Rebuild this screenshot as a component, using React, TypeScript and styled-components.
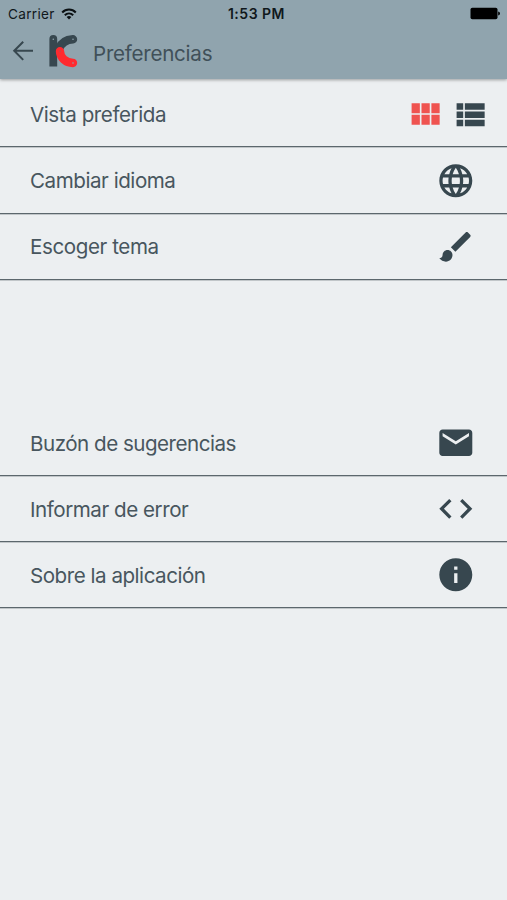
import React from "react";
import styled, { createGlobalStyle } from "styled-components";

const ink = "#37474f";

const GlobalStyle = createGlobalStyle`
  * { box-sizing: border-box; }
  body { margin: 0; background: #eceff1; font-family: Inter, "Liberation Sans", sans-serif; }
`;

const Screen = styled.main`
  min-height: 900px;
  background: #eceff1;
  overflow: hidden;
`;

const Header = styled.header`
  height: 79px;
  background: #90a4ae;
  box-shadow: 0 1px 3px rgba(0, 0, 0, 0.35);
`;

const StatusBar = styled.div`
  display: grid;
  grid-template-columns: 1fr auto 1fr;
  align-items: center;
  height: 27px;
  padding: 0 7px 0 8px;
  color: #10181c;
  font-size: 13.6px;
`;

const Carrier = styled.div`
  display: flex;
  align-items: center;
  gap: 6px;
  letter-spacing: 0.3px;
`;

const Clock = styled.div`
  font-weight: 600;
  font-size: 14px;
  letter-spacing: 0.5px;
  padding-left: 5px;
`;

const BatterySlot = styled.div`
  display: flex;
  justify-content: flex-end;
`;

const NavBar = styled.div`
  display: flex;
  align-items: center;
  height: 50px;
  padding-left: 9px;
`;

const Back = styled.button`
  display: flex;
  padding: 0;
  border: 0;
  margin-top: -2px;
  background: none;
  color: ${ink};
`;

const Logo = styled.svg`
  margin: -2px 15px 0 11px;
`;

const Title = styled.h1`
  margin: 2px 0 0;
  font-size: 20.6px;
  font-weight: 400;
  color: #405059;
  letter-spacing: -0.26px;
`;

const List = styled.section<{ $gap: number }>`
  margin-top: ${(p) => p.$gap}px;
`;

const Row = styled.div<{ $end: number }>`
  display: flex;
  align-items: center;
  justify-content: space-between;
  height: 66.1px;
  padding: 1.2px ${(p) => p.$end}px 0 30px;
  border-bottom: 1px solid #5c676d;
  box-shadow: 0 1px 0 rgba(92, 103, 109, 0.3);
`;

const Label = styled.span<{ $spacing: number }>`
  padding-top: 1px;
  font-size: 20.6px;
  line-height: 26px;
  color: #48565e;
  white-space: nowrap;
  letter-spacing: ${(p) => p.$spacing}px;
`;

const Icons = styled.div`
  display: flex;
  gap: 5.4px;
`;

const Glyph = styled.svg<{ $color?: string }>`
  display: block;
  width: 39.6px;
  height: 39.6px;
  fill: ${(p) => p.$color ?? ink};
`;

const paths = {
  module:
    "M4 11h5V5H4v6zm0 7h5v-6H4v6zm6 0h5v-6h-5v6zm6 0h5v-6h-5v6zm-6-7h5V5h-5v6zm6-6v6h5V5h-5z",
  list: "M4 14h4v-4H4v4zm0 5h4v-4H4v4zM4 9h4V5H4v4zm5 5h12v-4H9v4zm0 5h12v-4H9v4zM9 5v4h12V5H9z",
  globe:
    "M11.99 2C6.47 2 2 6.48 2 12s4.47 10 9.99 10C17.52 22 22 17.52 22 12S17.52 2 11.99 2zm6.93 6h-2.95c-.32-1.25-.78-2.45-1.38-3.56 1.84.63 3.37 1.91 4.33 3.56zM12 4.04c.83 1.2 1.48 2.53 1.91 3.96h-3.82c.43-1.43 1.08-2.76 1.91-3.96zM4.26 14C4.1 13.36 4 12.69 4 12s.1-1.36.26-2h3.38c-.08.66-.14 1.32-.14 2 0 .68.06 1.34.14 2H4.26zm.82 2h2.95c.32 1.25.78 2.45 1.38 3.56-1.84-.63-3.37-1.9-4.33-3.56zm2.95-8H5.08c.96-1.66 2.49-2.93 4.33-3.56C8.81 5.55 8.35 6.75 8.03 8zM12 19.96c-.83-1.2-1.48-2.53-1.91-3.96h3.82c-.43 1.43-1.08 2.76-1.91 3.96zM14.34 14H9.66c-.09-.66-.16-1.32-.16-2 0-.68.07-1.35.16-2h4.68c.09.65.16 1.32.16 2 0 .68-.07 1.34-.16 2zm.25 5.56c.6-1.11 1.06-2.31 1.38-3.56h2.95c-.96 1.65-2.49 2.93-4.33 3.56zM16.36 14c.08-.66.14-1.32.14-2 0-.68-.06-1.34-.14-2h3.38c.16.64.26 1.31.26 2s-.1 1.36-.26 2h-3.38z",
  brush:
    "M7 14c-1.66 0-3 1.34-3 3 0 1.31-1.16 2-2 2 .92 1.22 2.49 2 4 2 2.21 0 4-1.79 4-4 0-1.66-1.34-3-3-3zm13.71-9.37l-1.34-1.34c-.39-.39-1.02-.39-1.41 0L9 12.25 11.75 15l8.96-8.96c.39-.39.39-1.02 0-1.41z",
  mail: "M20 4H4c-1.1 0-1.99.9-1.99 2L2 18c0 1.1.9 2 2 2h16c1.1 0 2-.9 2-2V6c0-1.1-.9-2-2-2zm0 4l-8 5-8-5V6l8 5 8-5v2z",
  code: "M9.4 16.6L4.8 12l4.6-4.6L8 6l-6 6 6 6 1.4-1.4zm5.2 0l4.6-4.6-4.6-4.6L16 6l6 6-6 6-1.4-1.4z",
  info: "M12 2C6.48 2 2 6.48 2 12s4.48 10 10 10 10-4.48 10-10S17.52 2 12 2zm1 15h-2v-6h2v6zm0-8h-2V7h2v2z",
};

type IconName = keyof typeof paths;

const Icon = ({ name, color }: { name: IconName; color?: string }) => (
  <Glyph viewBox="0 0 24 24" $color={color} aria-hidden>
    <path d={paths[name]} />
  </Glyph>
);

interface Item {
  label: string;
  icon: IconName;
  spacing: number;
}

const general: Item[] = [
  { label: "Cambiar idioma", icon: "globe", spacing: -0.46 },
  { label: "Escoger tema", icon: "brush", spacing: -0.42 },
];

const support: Item[] = [
  { label: "Buzón de sugerencias", icon: "mail", spacing: -0.5 },
  { label: "Informar de error", icon: "code", spacing: -0.47 },
  { label: "Sobre la aplicación", icon: "info", spacing: -0.48 },
];

const ItemRow = ({ label, icon, spacing }: Item) => (
  <Row $end={31.7}>
    <Label $spacing={spacing}>{label}</Label>
    <Icon name={icon} />
  </Row>
);

export default function App() {
  return (
    <Screen>
      <GlobalStyle />
      <Header>
        <StatusBar>
          <Carrier>
            <span>Carrier</span>
            <svg width="16" height="12" viewBox="0 0 16 12" fill="none" stroke="#0b1013" strokeWidth="2">
              <path d="M1.2 4.5C5 .5 11 .5 14.8 4.5" />
              <path d="M3.8 7.2C6.2 4.8 9.8 4.8 12.2 7.2" />
              <path d="M8 11.5L5.6 9.1Q8 7 10.4 9.1z" fill="#0b1013" stroke="none" />
            </svg>
          </Carrier>
          <Clock>1:53 PM</Clock>
          <BatterySlot>
            <svg width="30" height="13" viewBox="0 0 30 13">
              <rect x="0.5" y="0.8" width="27" height="11.4" rx="1.8" />
              <path d="M28.2 4.5Q30 5 30 6.5T28.2 8.5z" />
            </svg>
          </BatterySlot>
        </StatusBar>
        <NavBar>
          <Back aria-label="Volver">
            <svg width="28" height="28" viewBox="0 0 28 28" fill="none" stroke={ink} strokeWidth="2">
              <path d="M14.2 4.7L5.2 13.8l9 9.1M5.2 13.8H24" />
            </svg>
          </Back>
          <Logo width="30" height="34" viewBox="0 0 30 34" fill="none">
            <path d="M1.4 5a3.9 3.9 0 0 1 7.8 0v27.5H1.4z" fill={ink} />
            <path d="M11 14.5C13 9.5 17.5 5.8 25 5.3" stroke={ink} strokeWidth="8.4" strokeLinecap="round" />
            <path d="M12 17.2C12.1 23.5 17.5 28.8 25 29" stroke="#ff2a2f" strokeWidth="8.4" strokeLinecap="round" />
            <g fill="#90a4ae">
              <circle cx="5.3" cy="5.2" r="0.8" />
              <circle cx="25" cy="5.3" r="0.8" />
              <circle cx="25" cy="29" r="0.8" />
            </g>
            <circle cx="12" cy="17.2" r="0.8" fill="#a8555c" />
          </Logo>
          <Title>Preferencias</Title>
        </NavBar>
      </Header>
      <List $gap={2.4}>
        <Row $end={17}>
          <Label $spacing={-0.43}>Vista preferida</Label>
          <Icons>
            <Icon name="module" color="#ef5350" />
            <Icon name="list" />
          </Icons>
        </Row>
        {general.map((item) => (
          <ItemRow key={item.label} {...item} />
        ))}
      </List>
      <List $gap={130.2}>
        {support.map((item) => (
          <ItemRow key={item.label} {...item} />
        ))}
      </List>
    </Screen>
  );
}
